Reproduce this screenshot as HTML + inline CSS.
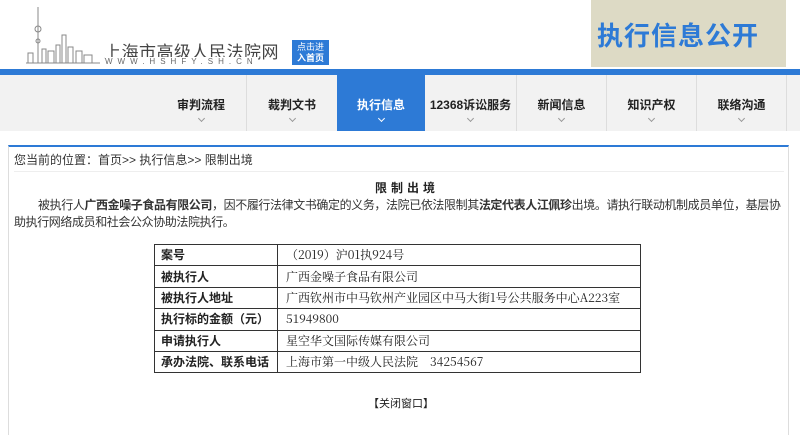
<!DOCTYPE html>
<html><head><meta charset="utf-8"><style>
*{margin:0;padding:0;box-sizing:border-box}
body{width:800px;height:422px;overflow:hidden;background:#fff;font-family:"Liberation Sans","Noto Sans CJK SC",sans-serif;color:#222;position:relative}
.abs{position:absolute}
.nav{position:absolute;left:0;top:75px;width:800px;height:56px;background:#f2f2f2}
.tab{position:absolute;top:0;height:56px;text-align:center;font-size:12px;font-weight:bold;color:#222;border-left:1px solid #ddd}
.tab span{display:block;margin-top:21px}
.tab i{display:block;margin:3px auto 0;width:5px;height:5px;border-right:1px solid #999;border-bottom:1px solid #999;transform:rotate(45deg)}
table{border-collapse:collapse;position:absolute;left:154px;top:244px;width:487px;font-size:12px}
td{border:1px solid #333;height:21.4px;padding:0 8px;font-family:"Noto Serif CJK SC","Liberation Serif",serif;white-space:nowrap;line-height:14px}
td.k{width:123px;padding:0 6px;font-weight:bold;font-family:"Liberation Sans","Noto Sans CJK SC",sans-serif}
</style></head><body>
<svg class="abs" style="left:24px;top:5px" width="80" height="60" viewBox="0 0 80 60"><g stroke="#888" fill="none" stroke-width="1"><line x1="14" y1="2" x2="14" y2="58"/><circle cx="14" cy="24" r="3"/><circle cx="14" cy="36" r="2"/><path d="M4 58V48h5v10M18 58V44h4v14M24 58V46h6v12M32 58V40h4v18M38 58V30h4v28M44 58V42h5v16M52 58V46h6v12M60 58V50h8v8M2 58h74"/></g></svg>
<div class="abs" style="left:104px;top:38px;font-size:17px;color:#444;letter-spacing:0.5px">上海市高级人民法院网</div>
<div class="abs" style="left:105px;top:57px;font-size:8px;color:#666;letter-spacing:5px;line-height:9px;white-space:nowrap;background:#fff">WWW.HSHFY.SH.CN</div>
<div class="abs" style="left:292px;top:40px;width:37px;height:25px;background:#2d7ad6;color:#fff;font-size:9px;line-height:11px;text-align:center;padding-top:2px">点击进<br><b>入首页</b></div>
<div class="abs" style="left:591px;top:0;width:195px;height:67px;background:#dddac5"></div>
<div class="abs" style="left:597px;top:16px;font-size:26px;font-weight:bold;color:#2d7ad6;letter-spacing:1px">执行信息公开</div>
<div class="abs" style="left:0;top:69px;width:800px;height:6px;background:#2d7ad6"></div>
<div class="nav">
<div class="tab" style="left:156px;width:90px;border-left:none"><span>审判流程</span><i></i></div>
<div class="tab" style="left:246px;width:91px"><span>裁判文书</span><i></i></div>
<div class="tab" style="left:337px;width:88px;background:#2d7ad6;color:#fff;border-left:none"><span>执行信息</span><i style="border-color:#fff"></i></div>
<div class="tab" style="left:425px;width:91px;border-left:none"><span>12368诉讼服务</span><i></i></div>
<div class="tab" style="left:516px;width:90px"><span>新闻信息</span><i></i></div>
<div class="tab" style="left:606px;width:90px"><span>知识产权</span><i></i></div>
<div class="tab" style="left:696px;width:90px"><span>联络沟通</span><i></i></div>
<div class="tab" style="left:786px;width:14px"></div>
</div>
<div class="abs" style="left:8px;top:145px;width:781px;height:290px;border-top:2px solid #2d7ad6;border-left:1px solid #ddd;border-right:1px solid #ddd"></div>
<div class="abs" style="left:14px;top:151px;font-size:12px;color:#333">您当前的位置：首页&gt;&gt; 执行信息&gt;&gt; 限制出境</div>
<div class="abs" style="left:14px;top:171px;width:770px;height:1px;background:#eee"></div>
<div class="abs" style="left:0;top:179px;width:800px;text-align:center;font-size:12px;font-weight:bold;letter-spacing:4px;padding-left:14px">限制出境</div>
<div class="abs" style="left:14px;top:197px;width:772px;font-size:12px;line-height:17px;text-indent:24px;color:#333;letter-spacing:-0.4px">被执行人<b>广西金噪子食品有限公司</b>，因不履行法律文书确定的义务，法院已依法限制其<b>法定代表人江佩珍</b>出境。请执行联动机制成员单位，基层协助执行网络成员和社会公众协助法院执行。</div>
<table>
<tr><td class="k">案号</td><td>（2019）沪01执924号</td></tr>
<tr><td class="k">被执行人</td><td>广西金噪子食品有限公司</td></tr>
<tr><td class="k">被执行人地址</td><td>广西钦州市中马钦州产业园区中马大街1号公共服务中心A223室</td></tr>
<tr><td class="k">执行标的金额（元）</td><td>51949800</td></tr>
<tr><td class="k">申请执行人</td><td>星空华文国际传媒有限公司</td></tr>
<tr><td class="k">承办法院、联系电话</td><td>上海市第一中级人民法院　34254567</td></tr>
</table>
<div class="abs" style="left:0;top:395px;width:800px;text-align:center;font-size:11px;padding-left:2px">【关闭窗口】</div>
</body></html>
